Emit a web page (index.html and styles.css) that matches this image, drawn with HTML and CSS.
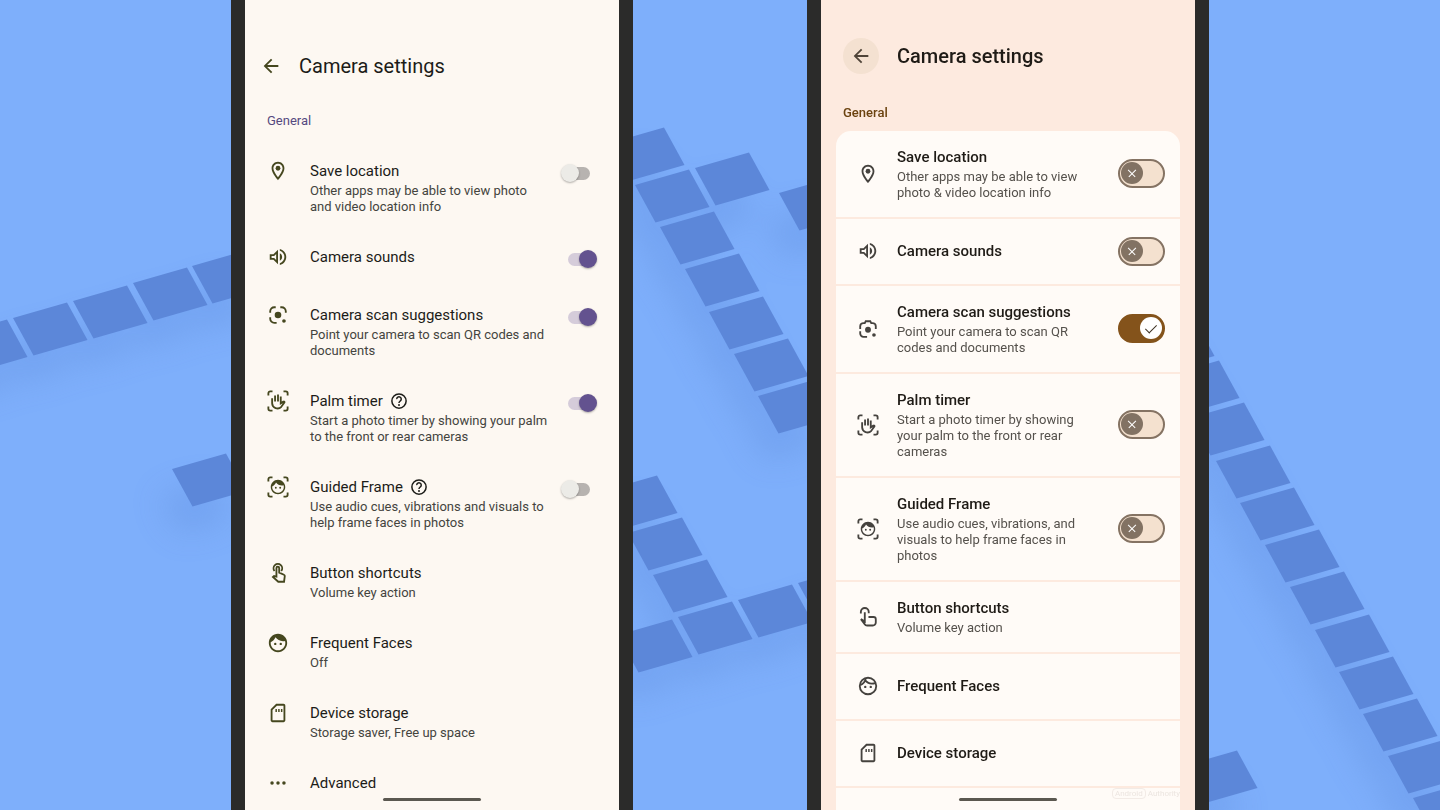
FILE: index.html
```html
<!DOCTYPE html>
<html lang="en">
<head>
  <meta charset="UTF-8">
  <meta name="viewport" content="width=device-width, initial-scale=1.0">
  <title>Camera settings</title>
  <link rel="stylesheet" href="styles.css">
</head>
<body>
  <!-- icon set -->
  <svg class="sprite" aria-hidden="true">
    <symbol id="back" viewBox="0 0 24 24"><path d="M20 11H7.83l5.59-5.59L12 4l-8 8 8 8 1.41-1.41L7.83 13H20v-2z"/></symbol>
    <symbol id="pin" viewBox="0 0 24 24"><path d="M12 2C8.13 2 5 5.13 5 9c0 5.25 7 13 7 13s7-7.75 7-13c0-3.87-3.13-7-7-7zM7 9c0-2.76 2.24-5 5-5s5 2.24 5 5c0 2.88-2.88 7.19-5 9.88C9.92 16.21 7 11.85 7 9z"/><circle cx="12" cy="9" r="2.6"/></symbol>
    <symbol id="sound" viewBox="0 0 24 24"><path d="M3 9v6h4l5 5V4L7 9H3zm7-.17v6.34L7.83 13H5v-2h2.83L10 8.83zM16.5 12c0-1.77-1.02-3.29-2.5-4.03v8.05c1.48-.73 2.5-2.25 2.5-4.02zM14 3.23v2.06c2.89.86 5 3.54 5 6.71s-2.11 5.85-5 6.71v2.06c4.01-.91 7-4.49 7-8.77 0-4.28-2.99-7.86-7-8.77z"/></symbol>
    <symbol id="lens" viewBox="0 0 24 24"><path class="line" d="M3.5 9.5V8A4.5 4.5 0 0 1 8 3.5h1.5M14.5 3.5H16A4.5 4.5 0 0 1 20.5 8v1.5M3.5 14.5V16A4.5 4.5 0 0 0 8 20.5h2.5"/><circle cx="12" cy="12" r="3.6"/><circle cx="18.5" cy="18.5" r="2"/></symbol>
    <symbol id="lens-camera" viewBox="0 0 24 24"><path class="line" d="M3.5 12V9A3.5 3.5 0 0 1 7 5.5h1.5l1-2h5l1 2H17A3.5 3.5 0 0 1 20.5 9v3M3.5 14.5V17A3.5 3.5 0 0 0 7 20.5h4"/><circle cx="12" cy="12.8" r="3.2"/><circle cx="18.5" cy="18.5" r="2"/></symbol>
    <symbol id="corners" viewBox="0 0 24 24"><path class="line" d="M1.5 6V3.5a2 2 0 0 1 2-2H6M18 1.5h2.5a2 2 0 0 1 2 2V6M22.5 18v2.5a2 2 0 0 1-2 2H18M6 22.5H3.5a2 2 0 0 1-2-2V18"/></symbol>
    <symbol id="palm" viewBox="0 0 24 24"><use href="#corners"/><path class="line" d="M5.6 9v5.5a5.8 5.8 0 0 0 10 3.8l3.4-4.6c.5-.7-.4-1.5-1.1-1L15 14.6V7.2M8.8 12.5V6M12 12.5V4.8"/></symbol>
    <symbol id="face" viewBox="0 0 24 24"><circle cx="9" cy="13" r="1.3"/><circle cx="15" cy="13" r="1.3"/><path d="M12 2C6.48 2 2 6.48 2 12s4.48 10 10 10 10-4.48 10-10S17.52 2 12 2zm0 18c-4.41 0-8-3.59-8-8 0-.29.02-.58.05-.86 2.36-1.05 4.23-2.98 5.21-5.37C11.07 8.33 14.05 10 17.42 10c.78 0 1.53-.09 2.25-.26.21.71.33 1.47.33 2.26 0 4.41-3.59 8-8 8z"/></symbol>
    <symbol id="face-line" viewBox="0 0 24 24"><circle cx="9" cy="13" r="1.3"/><circle cx="15" cy="13" r="1.3"/><circle class="line" cx="12" cy="12" r="9"/><path class="line" d="M3.5 11C7 9.8 9 7 9.5 3.8M8.8 5.5C11 8.8 15.5 10 20.2 8.8"/></symbol>
    <symbol id="guided" viewBox="0 0 24 24"><use href="#corners"/><use href="#face" x="2.5" y="2.5" width="19" height="19"/></symbol>
    <symbol id="touch" viewBox="0 0 24 24"><path class="line" d="M10.3 16V6.5a1.5 1.5 0 0 1 3 0v5l5.2 2.4c.7.3 1 .9.9 1.6l-.8 6h-6.3l-5.8-5.1 1.2-1.1zM8.2 9.8a4.7 4.7 0 1 1 7.3 0"/></symbol>
    <symbol id="touch-line" viewBox="0 0 24 24"><path class="line" d="M4.2 8.2V6.5a4.3 4.3 0 0 1 8.6 0V8M8.5 6.8V17l-4.2-2.7 4.1 5.5a3.2 3.2 0 0 0 2.6 1.5h6.3a3.2 3.2 0 0 0 3.2-3.2v-3.6a2.5 2.5 0 0 0-2.5-2.5h-5.5"/></symbol>
    <symbol id="card" viewBox="0 0 24 24"><path d="M18 2h-8L4.02 8 4 20c0 1.1.9 2 2 2h12c1.1 0 2-.9 2-2V4c0-1.1-.9-2-2-2zm0 18H6V8.83L10.83 4H18v16zM9.2 7.5h1.6v3.5H9.2zM12.2 7.5h1.6v3.5h-1.6zM15.2 7.5h1.6v3.5h-1.6z"/></symbol>
    <symbol id="dots" viewBox="0 0 24 24"><circle cx="5.5" cy="12" r="1.9"/><circle cx="12" cy="12" r="1.9"/><circle cx="18.5" cy="12" r="1.9"/></symbol>
    <symbol id="help" viewBox="0 0 24 24"><circle class="line" cx="12" cy="12" r="9.5"/><path class="line" d="M9 9.5a3 3 0 1 1 4.6 2.5c-1 .7-1.6 1.2-1.6 2.5"/><circle cx="12" cy="17.3" r="1.3"/></symbol>
  </svg>

  <!-- wallpaper -->
  <svg class="wallpaper" viewBox="0 0 1440 810" preserveAspectRatio="xMidYMid slice" aria-hidden="true">
    <defs>
      <path id="t" d="M0 0 54-15.5 74.5 22 20.5 37.5z"/>
      <filter id="soft" x="-10%" y="-10%" width="120%" height="120%"><feGaussianBlur stdDeviation="16"/></filter>
      <g id="tiles">
        <use href="#t" x="-47" y="335"/><use href="#t" x="13" y="318"/><use href="#t" x="73" y="301"/><use href="#t" x="133" y="283"/><use href="#t" x="192" y="266"/>
        <use href="#t" x="172" y="469"/>
        <use href="#t" x="610" y="143"/><use href="#t" x="635" y="185"/><use href="#t" x="660" y="227"/><use href="#t" x="685" y="269"/><use href="#t" x="709" y="312"/><use href="#t" x="734" y="354"/><use href="#t" x="758" y="396"/>
        <use href="#t" x="695" y="168"/><use href="#t" x="779" y="193"/>
        <use href="#t" x="603" y="491"/><use href="#t" x="628" y="533"/><use href="#t" x="653" y="575"/>
        <use href="#t" x="618" y="635"/><use href="#t" x="678" y="617"/><use href="#t" x="738" y="600"/><use href="#t" x="798" y="583"/>
        <use href="#t" x="1140" y="334"/><use href="#t" x="1165" y="376"/><use href="#t" x="1190" y="418"/><use href="#t" x="1216" y="461"/><use href="#t" x="1240" y="503"/><use href="#t" x="1265" y="545"/><use href="#t" x="1290" y="587"/><use href="#t" x="1315" y="630"/><use href="#t" x="1339" y="672"/><use href="#t" x="1363" y="714"/><use href="#t" x="1388" y="756"/><use href="#t" x="1413" y="798"/>
        <use href="#t" x="1183" y="766"/>
      </g>
    </defs>
    <use class="tile-shadow" href="#tiles" x="-14" y="28" filter="url(#soft)"/>
    <use class="tile-shape" href="#tiles"/>
  </svg>

  <main class="phones">
    <section class="phone old">
      <div class="screen">
        <header class="bar">
          <button class="back" aria-label="Back"><svg class="icon"><use href="#back"/></svg></button>
          <h1>Camera settings</h1>
        </header>
        <h2>General</h2>
        <ul class="list">
          <li class="row">
            <svg class="icon"><use href="#pin"/></svg>
            <div class="text"><label class="title" for="old-location">Save location</label><p>Other apps may be able to view photo and video location info</p></div>
            <input class="switch" type="checkbox" id="old-location">
          </li>
          <li class="row">
            <svg class="icon"><use href="#sound"/></svg>
            <div class="text"><label class="title" for="old-sounds">Camera sounds</label></div>
            <input class="switch" type="checkbox" id="old-sounds" checked>
          </li>
          <li class="row">
            <svg class="icon"><use href="#lens"/></svg>
            <div class="text"><label class="title" for="old-scan">Camera scan suggestions</label><p>Point your camera to scan QR codes and documents</p></div>
            <input class="switch" type="checkbox" id="old-scan" checked>
          </li>
          <li class="row">
            <svg class="icon"><use href="#palm"/></svg>
            <div class="text">
              <div class="title-line"><label class="title" for="old-palm">Palm timer</label><button class="help" aria-label="Help"><svg><use href="#help"/></svg></button></div>
              <p>Start a photo timer by showing your palm to the front or rear cameras</p>
            </div>
            <input class="switch" type="checkbox" id="old-palm" checked>
          </li>
          <li class="row">
            <svg class="icon"><use href="#guided"/></svg>
            <div class="text">
              <div class="title-line"><label class="title" for="old-guided">Guided Frame</label><button class="help" aria-label="Help"><svg><use href="#help"/></svg></button></div>
              <p>Use audio cues, vibrations and visuals to help frame faces in photos</p>
            </div>
            <input class="switch" type="checkbox" id="old-guided">
          </li>
          <li>
            <a class="row" href="#">
              <svg class="icon"><use href="#touch"/></svg>
              <div class="text"><span class="title">Button shortcuts</span><p>Volume key action</p></div>
            </a>
          </li>
          <li>
            <a class="row" href="#">
              <svg class="icon"><use href="#face"/></svg>
              <div class="text"><span class="title">Frequent Faces</span><p>Off</p></div>
            </a>
          </li>
          <li>
            <a class="row" href="#">
              <svg class="icon"><use href="#card"/></svg>
              <div class="text"><span class="title">Device storage</span><p>Storage saver, Free up space</p></div>
            </a>
          </li>
          <li>
            <a class="row" href="#">
              <svg class="icon"><use href="#dots"/></svg>
              <div class="text"><span class="title">Advanced</span></div>
            </a>
          </li>
        </ul>
        <div class="home"></div>
      </div>
    </section>

    <section class="phone new">
      <div class="screen">
        <header class="bar">
          <button class="back" aria-label="Back"><svg class="icon"><use href="#back"/></svg></button>
          <h1>Camera settings</h1>
        </header>
        <h2>General</h2>
        <ul class="list">
          <li class="row">
            <svg class="icon"><use href="#pin"/></svg>
            <div class="text"><label class="title" for="new-location">Save location</label><p>Other apps may be able to view photo &amp; video location info</p></div>
            <input class="switch" type="checkbox" id="new-location">
          </li>
          <li class="row">
            <svg class="icon"><use href="#sound"/></svg>
            <div class="text"><label class="title" for="new-sounds">Camera sounds</label></div>
            <input class="switch" type="checkbox" id="new-sounds">
          </li>
          <li class="row">
            <svg class="icon"><use href="#lens-camera"/></svg>
            <div class="text"><label class="title" for="new-scan">Camera scan suggestions</label><p>Point your camera to scan QR codes and documents</p></div>
            <input class="switch" type="checkbox" id="new-scan" checked>
          </li>
          <li class="row">
            <svg class="icon"><use href="#palm"/></svg>
            <div class="text"><label class="title" for="new-palm">Palm timer</label><p>Start a photo timer by showing your palm to the front or rear cameras</p></div>
            <input class="switch" type="checkbox" id="new-palm">
          </li>
          <li class="row">
            <svg class="icon"><use href="#guided"/></svg>
            <div class="text"><label class="title" for="new-guided">Guided Frame</label><p>Use audio cues, vibrations, and visuals to help frame faces in photos</p></div>
            <input class="switch" type="checkbox" id="new-guided">
          </li>
          <li>
            <a class="row" href="#">
              <svg class="icon"><use href="#touch-line"/></svg>
              <div class="text"><span class="title">Button shortcuts</span><p>Volume key action</p></div>
            </a>
          </li>
          <li>
            <a class="row" href="#">
              <svg class="icon"><use href="#face-line"/></svg>
              <div class="text"><span class="title">Frequent Faces</span></div>
            </a>
          </li>
          <li>
            <a class="row" href="#">
              <svg class="icon"><use href="#card"/></svg>
              <div class="text"><span class="title">Device storage</span></div>
            </a>
          </li>
          <li class="row"></li>
        </ul>
        <div class="home"></div>
        <div class="credit"><span>Android</span> Authority</div>
      </div>
    </section>
  </main>
</body>
</html>
```
FILE: styles.css
```css
* { margin: 0; padding: 0; box-sizing: border-box; }
body { background: #7eaffb; font-family: Roboto, sans-serif; height: 100vh; overflow: hidden; }
ul { list-style: none; }
a { color: inherit; text-decoration: none; }
button { background: none; border: none; color: inherit; cursor: pointer; }
svg { fill: currentColor; }
.line { fill: none; stroke: currentColor; stroke-width: 2; }
.sprite { position: absolute; width: 0; height: 0; }

.wallpaper { position: absolute; inset: 0; width: 100%; height: 100%; }
.tile-shape { fill: #5c87d9; }
.tile-shadow { fill: #5c87d9; opacity: 0.3; }

.phones { position: relative; height: 100%; display: flex; justify-content: center; gap: 174px; }
.phone { width: 402px; padding: 0 14px; background: #2b2b2a; }
.screen { position: relative; height: 100%; overflow: hidden; }
.bar { display: flex; align-items: center; }
.back { display: flex; align-items: center; justify-content: center; }
.icon { width: 22px; height: 22px; flex: none; }
h1 { font-size: 20px; line-height: 28px; }
h2 { font-size: 13px; line-height: 18px; font-weight: 500; }
.row { display: flex; }
.text { flex: 1; }
.title { display: block; font-size: 15px; line-height: 22px; }
.row p { font-size: 13px; line-height: 16px; margin-top: 1px; }
.switch { appearance: none; position: relative; flex: none; cursor: pointer; }
.switch::before { content: ""; position: absolute; border-radius: 50%; }
.home { position: absolute; bottom: 9px; left: 50%; width: 98px; height: 3px; margin-left: -49px; border-radius: 2px; background: #5b5850; }

/* previous design */
.old .screen { background: #fdf8f2; color: #1c1c18; padding-top: 52px; }
.old .bar { padding-left: 15px; gap: 17px; }
.old .back { color: #45471f; }
.old h1 { font-weight: 400; }
.old h2 { color: #554a80; font-weight: 400; padding: 32px 22px 0; }
.old .list { padding-top: 15px; }
.old .row { padding: 15px 29px 16px 22px; min-height: 58px; gap: 21px; align-items: flex-start; }
.old .icon { color: #45471f; }
.old p { color: #44443e; }
.title-line { display: flex; gap: 7px; align-items: center; }
.help { display: flex; }
.help svg { width: 18px; height: 18px; }
.old .text { margin-right: -3px; }
.old .switch { width: 22px; height: 13px; margin-top: 7px; border-radius: 7px; background: #b7b3b0; }
.old .switch::before { width: 18px; height: 18px; top: -3px; left: -7px; background: #ecebe7; box-shadow: 0 1px 2px rgba(0,0,0,0.3); }
.old .switch:checked { background: #d5ccda; }
.old .switch:checked::before { left: 11px; background: #63528f; }

/* new design */
.new .screen { background: #fdeadf; color: #1f1b16; padding: 38px 15px 0; }
.new .bar { padding-left: 7px; gap: 18px; }
.new .back { width: 36px; height: 36px; border-radius: 50%; background: #f4e1d1; }
.new h1 { font-weight: 500; }
.new h2 { color: #6b4310; padding: 30px 7px 0; }
.new .list { margin-top: 9px; display: flex; flex-direction: column; gap: 2px; border-radius: 15px 15px 0 0; overflow: hidden; }
.new .row { padding: 15px 15px 16px 21px; min-height: 65px; gap: 18px; align-items: center; background: #fffbf7; }
.new .icon { color: #45423e; }
.new .back .icon { color: #4f4438; }
.new .title { font-weight: 500; }
.new p { color: #55514c; }
.new .switch { width: 47px; height: 29px; border: 2px solid #857363; border-radius: 15px; background: #f4e1cf; }
.new .switch::before { width: 22px; height: 22px; top: 1px; left: 1px; background: #827263; }
.new .switch::after { content: ""; position: absolute; top: 7px; left: 7px; width: 10px; height: 10px; transform: rotate(45deg);
  background: linear-gradient(#fff, #fff) center / 12px 1px no-repeat, linear-gradient(#fff, #fff) center / 1px 12px no-repeat; }
.new .switch:checked { background: #84531b; border-color: #84531b; }
.new .switch:checked::before { left: 20px; background: #fff; }
.new .switch:checked::after { background: none; top: 6px; left: 28px; width: 5px; height: 10px; border: solid #3c3022; border-width: 0 1px 1px 0; }
.credit { position: absolute; right: 15px; bottom: 10px; font-size: 8px; line-height: 12px; color: #ece5e0; }
.credit span { border: 1px solid #f2ebe6; border-radius: 4px; padding: 0 2px; }
```
